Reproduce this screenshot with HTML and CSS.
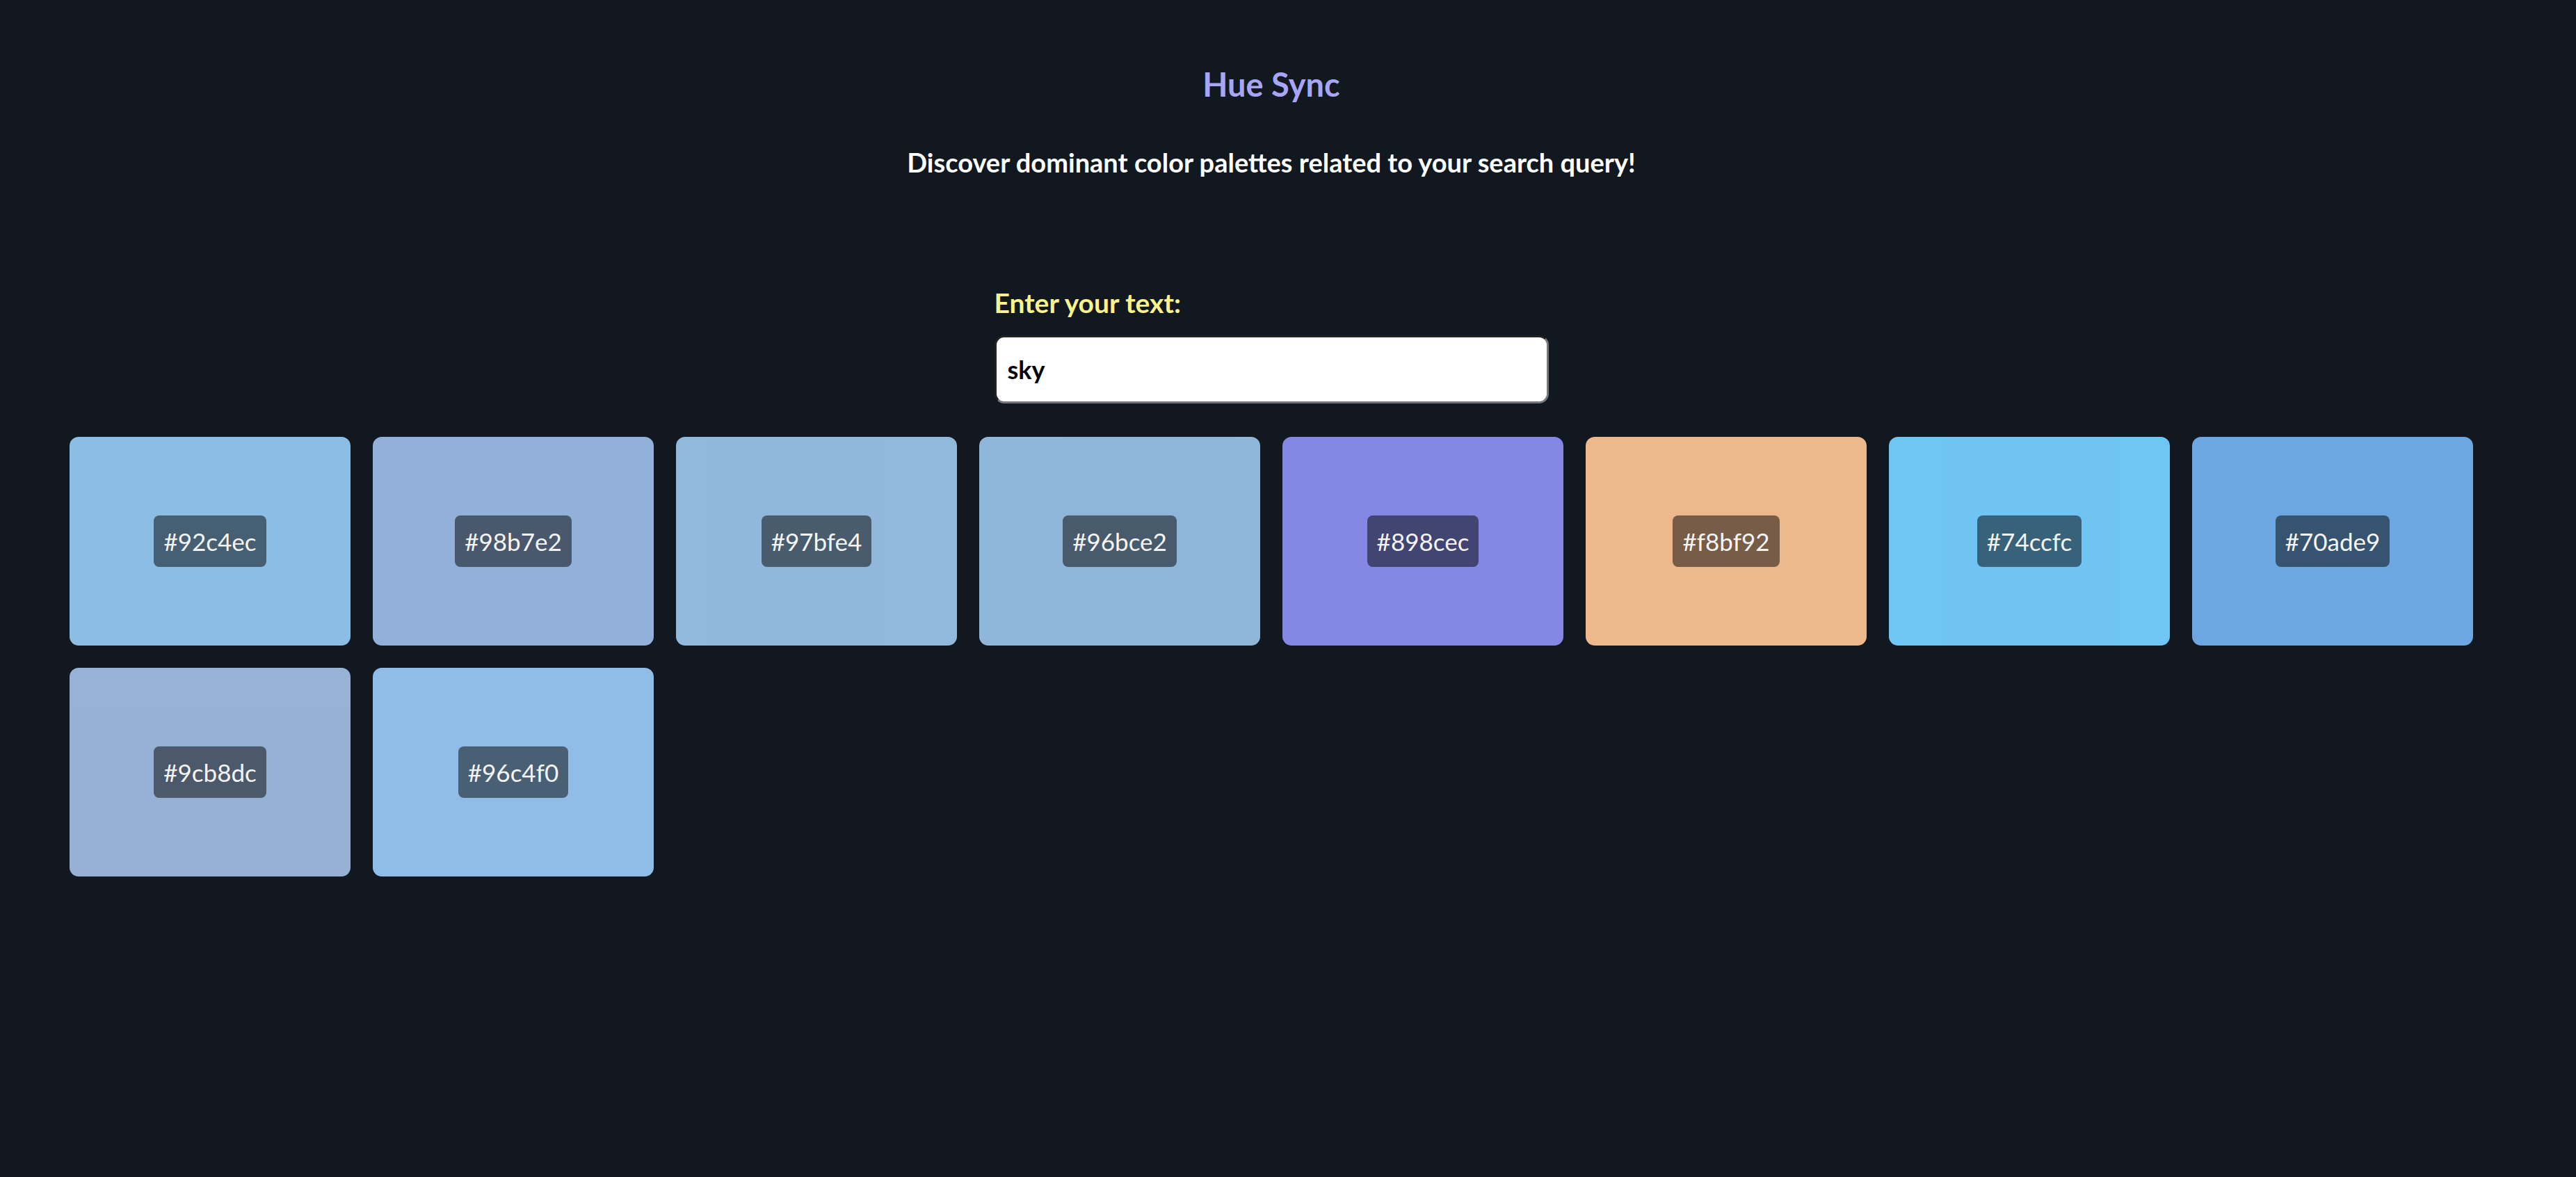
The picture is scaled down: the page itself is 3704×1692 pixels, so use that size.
FILE: index.html
```html
<!DOCTYPE html>
<html lang="en">
<head>
<meta charset="utf-8">
<title>Hue Sync</title>
<link rel="stylesheet" href="styles.css">
</head>
<body>
<div class="app">
  <header class="header">
    <h1 class="title">Hue Sync</h1>
    <p class="subtitle">Discover dominant color palettes related to your search query!</p>
  </header>
  <div class="search">
    <label class="search-label" for="q">Enter your text:</label>
    <input class="search-input" id="q" type="text" value="sky">
  </div>
  <div class="palette">
    <div class="swatch" style="background-color:#92c4ec"><span class="hex">#92c4ec</span></div>
    <div class="swatch" style="background-color:#98b7e2"><span class="hex">#98b7e2</span></div>
    <div class="swatch" style="background-color:#97bfe4"><span class="hex">#97bfe4</span></div>
    <div class="swatch" style="background-color:#96bce2"><span class="hex">#96bce2</span></div>
    <div class="swatch" style="background-color:#898cec"><span class="hex">#898cec</span></div>
    <div class="swatch" style="background-color:#f8bf92"><span class="hex">#f8bf92</span></div>
    <div class="swatch" style="background-color:#74ccfc"><span class="hex">#74ccfc</span></div>
    <div class="swatch" style="background-color:#70ade9"><span class="hex">#70ade9</span></div>
    <div class="swatch" style="background-color:#9cb8dc"><span class="hex">#9cb8dc</span></div>
    <div class="swatch" style="background-color:#96c4f0"><span class="hex">#96c4f0</span></div>
  </div>
</div>
</body>
</html>
```
FILE: styles.css
```css
html, body {
  margin: 0;
  padding: 0;
  background: #111820;
}
body {
  font-family: Lato, "Open Sans", sans-serif;
  color: #ffffff;
  min-height: 1692px;
}
.app {
  width: 3456px;
  padding: 0 148px 0 100px;
}
.header {
  display: flex;
  flex-direction: column;
  align-items: center;
  padding-top: 93px;
}
.title {
  margin: 0;
  font-size: 47px;
  font-weight: 700;
  color: #a7a6f5;
  line-height: normal;
}
.subtitle {
  margin: 61px 0 0 0;
  font-size: 38px;
  font-weight: 700;
  line-height: normal;
}
.search {
  width: 797px;
  margin: 0 auto;
  padding-top: 156px;
  display: flex;
  flex-direction: column;
}
.search-label {
  font-size: 39px;
  font-weight: 700;
  color: #fbf28b;
  line-height: normal;
}
.search-input {
  margin-top: 24px;
  box-sizing: border-box;
  width: 797px;
  height: 98px;
  border: 3px inset #767676;
  border-radius: 14px;
  padding: 0 16px;
  font-family: Lato, sans-serif;
  font-size: 36px;
  font-weight: 700;
  color: #000;
  background: #fff;
  outline: none;
}
.palette {
  margin-top: 48px;
  display: flex;
  flex-wrap: wrap;
  gap: 32px;
}
.swatch {
  width: 404px;
  height: 300px;
  border-radius: 13px;
  opacity: 0.96;
  display: flex;
  align-items: center;
  justify-content: center;
}
.hex {
  background: rgba(0, 0, 0, 0.5);
  color: #fff;
  font-size: 35px;
  line-height: 42px;
  padding: 16px 14px;
  border-radius: 8px;
}
```
